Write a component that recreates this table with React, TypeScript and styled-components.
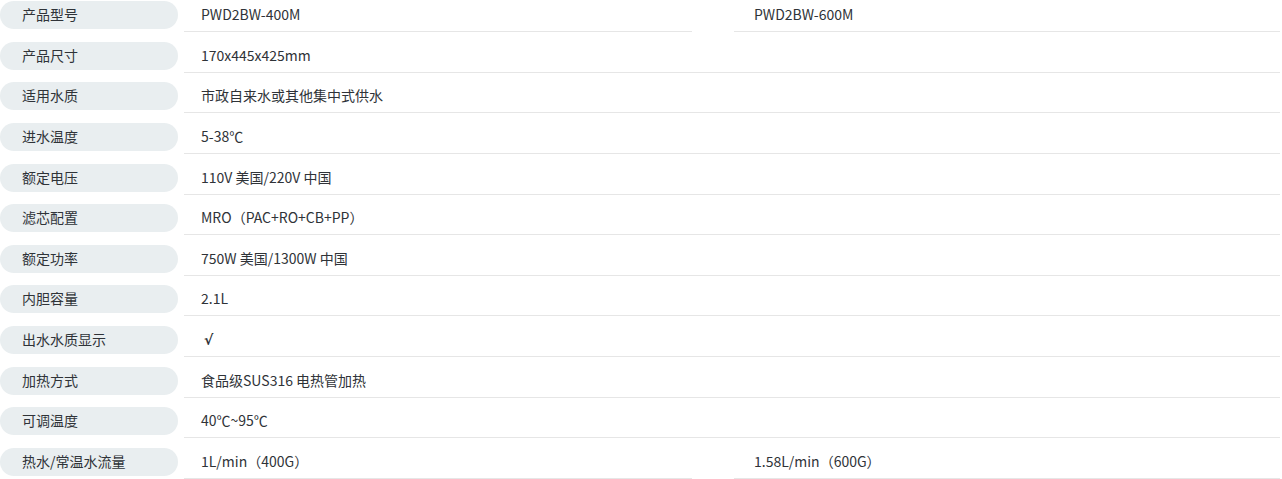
import React, { FC } from 'react';
import styled, { createGlobalStyle } from 'styled-components';

const GlobalStyle = createGlobalStyle`
    html, body {
        margin: 0;
        padding: 0;
        background: #fff;
    }
    body {
        font-family: "Noto Sans CJK SC", "Noto Sans", sans-serif;
        color: #2f3338;
    }
    * {
        box-sizing: border-box;
    }
`;

const Table = styled.div`
    width: 1280px;
    padding-top: 1px;
    display: flex;
    flex-direction: column;
    gap: 9.64px;
`;

const Row = styled.div`
    display: grid;
    grid-template-columns: 178px 1fr;
    column-gap: 6px;
`;

const Label = styled.div`
    height: 28px;
    line-height: 26px;
    border-radius: 14px;
    background-color: #e9eef0;
    padding-left: 22px;
    font-size: 14px;
    color: #2f3338;
    white-space: nowrap;
`;

const Values = styled.div<{ $split: boolean }>`
    display: flex;
    gap: ${p => (p.$split ? '42px' : '0')};
`;

const Cell = styled.div<{ $width?: number; $inset?: number }>`
    flex: ${p => (p.$width ? `0 0 ${p.$width}px` : '1 1 auto')};
    height: 31px;
    line-height: 27px;
    padding-left: ${p => p.$inset ?? 17}px;
    border-bottom: 1px solid #e6e6e6;
    font-size: 14px;
    color: #2f3338;
    white-space: nowrap;
`;

const Check = styled.span`
    font-family: "DejaVu Sans", sans-serif;
    font-size: 14px;
    font-weight: 700;
    padding-left: 3px;
`;

interface ISpec {
    label: string;
    value: React.ReactNode;
    second?: string;
}

const specs: ISpec[] = [
    { label: '产品型号', value: 'PWD2BW-400M', second: 'PWD2BW-600M' },
    { label: '产品尺寸', value: '170x445x425mm' },
    { label: '适用水质', value: '市政自来水或其他集中式供水' },
    { label: '进水温度', value: '5-38℃' },
    { label: '额定电压', value: '110V 美国/220V 中国' },
    { label: '滤芯配置', value: 'MRO（PAC+RO+CB+PP）' },
    { label: '额定功率', value: '750W 美国/1300W 中国' },
    { label: '内胆容量', value: '2.1L' },
    { label: '出水水质显示', value: <Check>√</Check> },
    { label: '加热方式', value: '食品级SUS316 电热管加热' },
    { label: '可调温度', value: '40℃~95℃' },
    { label: '热水/常温水流量', value: '1L/min（400G）', second: '1.58L/min（600G）' },
];

const SpecRow: FC<ISpec> = ({ label, value, second }) => (
    <Row>
        <Label>{label}</Label>
        <Values $split={!!second}>
            {second ? (
                <>
                    <Cell $width={508}>{value}</Cell>
                    <Cell $inset={20}>{second}</Cell>
                </>
            ) : (
                <Cell>{value}</Cell>
            )}
        </Values>
    </Row>
);

const App: FC = () => (
    <>
        <GlobalStyle />
        <Table>
            {specs.map(s => (
                <SpecRow key={s.label} {...s} />
            ))}
        </Table>
    </>
);

export default App;
